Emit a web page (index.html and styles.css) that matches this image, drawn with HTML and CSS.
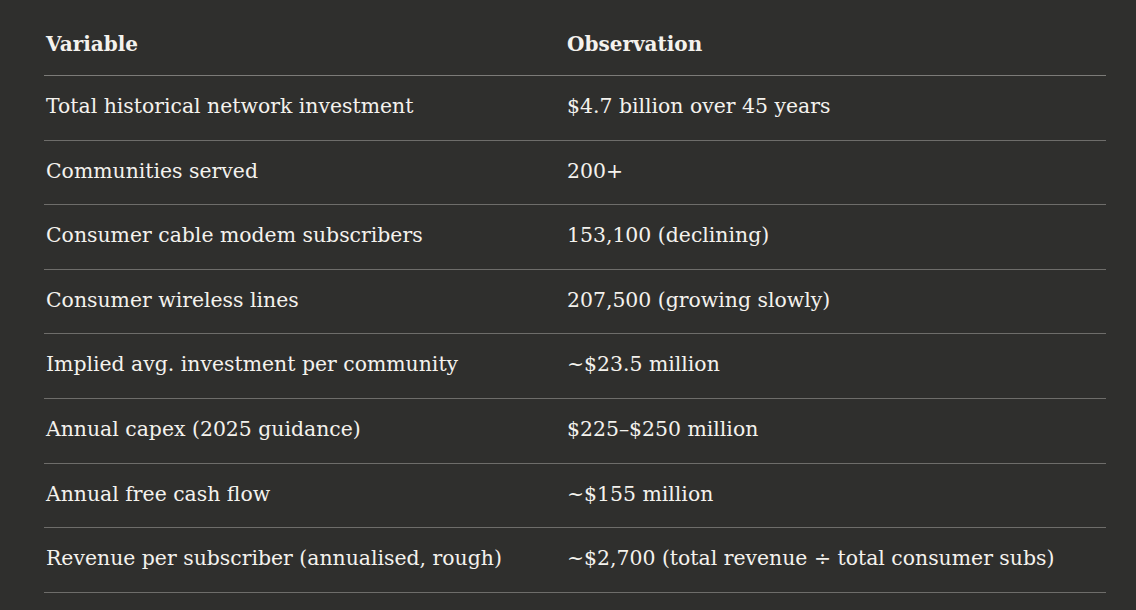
FILE: index.html
```html
<!DOCTYPE html>
<html lang="en">
<head>
<meta charset="utf-8">
<title>Network investment</title>
<link rel="stylesheet" href="styles.css">
</head>
<body>
<div class="wrap">
<table class="data">
<thead>
<tr><th class="c1">Variable</th><th>Observation</th></tr>
</thead>
<tbody>
<tr><td>Total historical network investment</td><td>$4.7 billion over 45 years</td></tr>
<tr><td>Communities served</td><td>200+</td></tr>
<tr><td>Consumer cable modem subscribers</td><td>153,100 (declining)</td></tr>
<tr><td>Consumer wireless lines</td><td>207,500 (growing slowly)</td></tr>
<tr><td>Implied avg. investment per community</td><td>~$23.5 million</td></tr>
<tr><td>Annual capex (2025 guidance)</td><td>$225–$250 million</td></tr>
<tr><td>Annual free cash flow</td><td>~$155 million</td></tr>
<tr><td>Revenue per subscriber (annualised, rough)</td><td>~$2,700 (total revenue ÷ total consumer subs)</td></tr>
</tbody>
</table>
</div>
</body>
</html>
```
FILE: styles.css
```css
html, body {
  margin: 0;
  padding: 0;
  background: #2f2f2d;
}
body {
  color: #f4f2ed;
  font-family: "DejaVu Serif", "Liberation Serif", serif;
  font-size: 20.4px;
}
.wrap {
  padding: 14px 30px 0 44px;
}
.data {
  width: 1062px;
  border-collapse: collapse;
  table-layout: fixed;
}
.data th {
  text-align: left;
  font-weight: 700;
  font-size: 20px;
  padding: 14px 2px 13.4px;
  line-height: 33.6px;
  border-bottom: 1px solid #7c7b78;
}
.data th.c1 {
  width: 517px;
}
.data td {
  padding: 14px 2px 16px;
  line-height: 33.625px;
  border-bottom: 1px solid #6e6d6a;
  vertical-align: top;
}
```
